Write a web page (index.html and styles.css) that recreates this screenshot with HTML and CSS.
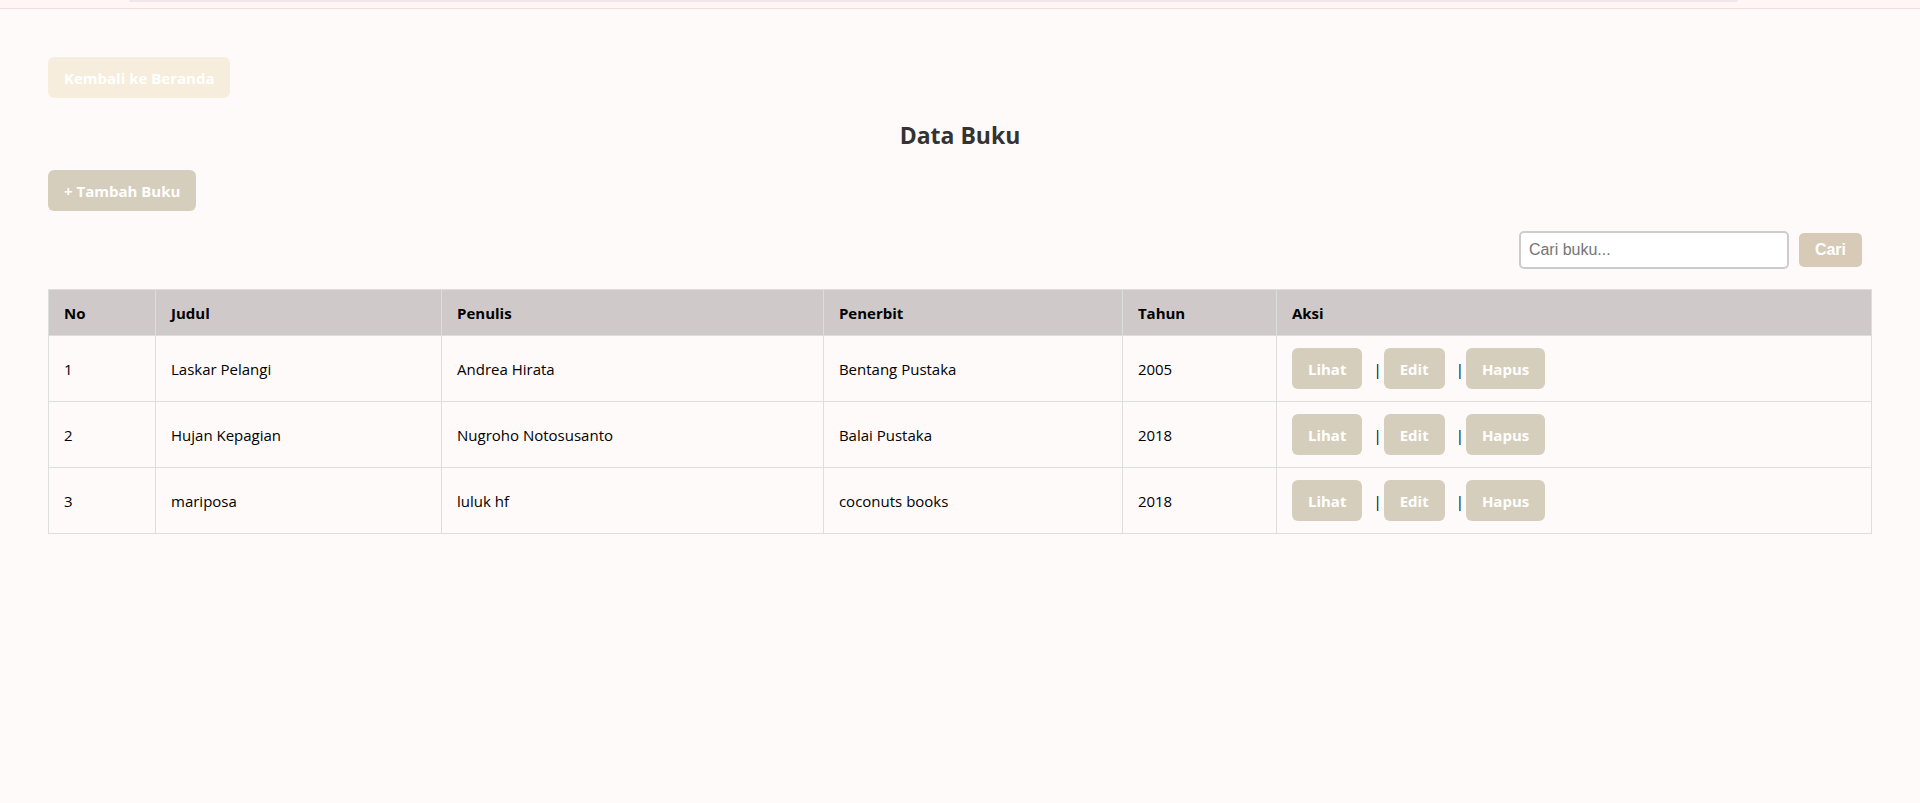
FILE: index.html
```html
<!DOCTYPE html>
<html lang="id">
<head>
<meta charset="utf-8">
<title>Data Buku</title>
<link rel="stylesheet" href="styles.css">
</head>
<body>
<div class="topbar"><div class="topbar-field"></div></div>
<main class="page">
  <a class="btn btn-back" href="#">Kembali ke Beranda</a>
  <h2 class="title">Data Buku</h2>
  <a class="btn" href="#">+ Tambah Buku</a>
  <form class="search">
    <input class="search-input" type="text" placeholder="Cari buku..." aria-label="Cari buku">
    <button class="search-button" type="button">Cari</button>
  </form>
  <table class="books">
    <colgroup>
      <col class="col-no"><col class="col-judul"><col class="col-penulis"><col class="col-penerbit"><col class="col-tahun"><col>
    </colgroup>
    <thead>
      <tr><th>No</th><th>Judul</th><th>Penulis</th><th>Penerbit</th><th>Tahun</th><th>Aksi</th></tr>
    </thead>
    <tbody>
      <tr>
        <td>1</td><td>Laskar Pelangi</td><td>Andrea Hirata</td><td>Bentang Pustaka</td><td>2005</td>
        <td class="actions-cell"><div class="actions"><a class="btn" href="#">Lihat</a><span class="sep">|</span><a class="btn" href="#">Edit</a><span class="sep">|</span><a class="btn" href="#">Hapus</a></div></td>
      </tr>
      <tr>
        <td>2</td><td>Hujan Kepagian</td><td>Nugroho Notosusanto</td><td>Balai Pustaka</td><td>2018</td>
        <td class="actions-cell"><div class="actions"><a class="btn" href="#">Lihat</a><span class="sep">|</span><a class="btn" href="#">Edit</a><span class="sep">|</span><a class="btn" href="#">Hapus</a></div></td>
      </tr>
      <tr>
        <td>3</td><td>mariposa</td><td>luluk hf</td><td>coconuts books</td><td>2018</td>
        <td class="actions-cell"><div class="actions"><a class="btn" href="#">Lihat</a><span class="sep">|</span><a class="btn" href="#">Edit</a><span class="sep">|</span><a class="btn" href="#">Hapus</a></div></td>
      </tr>
    </tbody>
  </table>
</main>
</body>
</html>
```

FILE: styles.css
```css
* { box-sizing: border-box; }

body {
  margin: 0;
  background: #fffafa;
  color: #000;
  font: 15px/21px "Segoe UI", "Open Sans", "Noto Sans", sans-serif;
}

.topbar {
  height: 9px;
  padding: 0 182px 0 129px;
  background: #fff6f5;
  border-bottom: 1px solid #f5dade;
}

.topbar-field {
  height: 2px;
  background: #f2e6ea;
  border-radius: 0 0 8px 8px;
}

.page { padding: 48px; }

.btn {
  display: inline-block;
  padding: 11px 16px 9px;
  border-radius: 6px;
  background: #d6cebc;
  color: #fff;
  font-weight: 700;
  text-decoration: none;
  vertical-align: top;
}

.btn-back { background: #f7eddc; }

.title {
  margin: 21px 0 19px;
  color: #333;
  font-size: 23px;
  line-height: 32px;
  text-align: center;
}

.search {
  display: flex;
  justify-content: flex-end;
  align-items: center;
  gap: 10px;
  margin: 20px 10px 20px 0;
}

.search-input,
.search-button {
  font: 16px/18px "Liberation Sans", Arial, sans-serif;
}

.search-input {
  width: 270px;
  padding: 8px;
  border: 2px solid #ccc;
  border-radius: 5px;
  background: #fff;
}

.search-input::placeholder { color: #757575; }

.search-button {
  padding: 8px 16px;
  border: 0;
  border-radius: 5px;
  background: #d7cbb8;
  color: #fff;
  font-weight: 700;
}

.books {
  width: 100%;
  table-layout: fixed;
  border-collapse: collapse;
}

.col-no { width: 5.87%; }
.col-judul { width: 15.69%; }
.col-penulis { width: 20.95%; }
.col-penerbit { width: 16.4%; }
.col-tahun { width: 8.45%; }

.books th,
.books td {
  padding: 13px 15px 11px;
  border: 1px solid #ddd;
  text-align: left;
}

.books th { background: #cfc9c9; }

.books .actions-cell { padding: 12px 15px; }

.actions { display: flex; }

.sep {
  padding: 11px 0 9px;
  margin: 0 2px 0 11px;
}
```
